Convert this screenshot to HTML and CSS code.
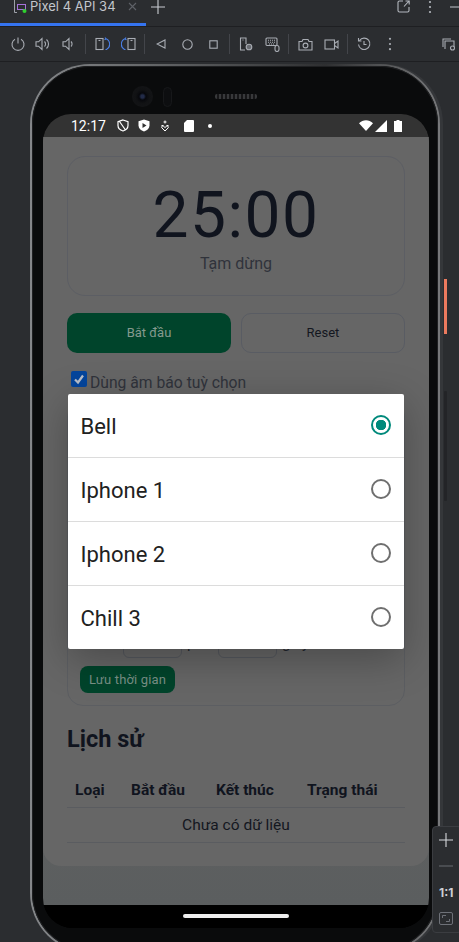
FILE: index.html
```html
<!DOCTYPE html>
<html lang="vi">
<head>
<meta charset="utf-8">
<title>Pixel 4 API 34</title>
<link rel="stylesheet" href="styles.css">
</head>
<body>
<div class="ide">
  <header class="tabbar">
    <div class="tab">
      <svg class="tab-icon" width="14" height="14" viewBox="0 0 14 14" fill="none"><path d="M4 12.500H1.500V-3H6" stroke="#9da0a8"/><rect x="4.500" y="4.500" width="8" height="5" stroke="#a572d8" fill="none"/><circle cx="11.500" cy="11" r="2" fill="#2fd02f"/></svg>
      <span class="tab-label">Pixel 4 API 34</span>
      <svg class="tab-close" width="9" height="9" viewBox="0 0 9 9"><path d="M1 1l7 7M8 1l-7 7" stroke="#5f6268" stroke-width="1.100"/></svg>
      <svg class="tab-add" width="14" height="14" viewBox="0 0 14 14"><path d="M7 0v14M0 7h14" stroke="#c9ccd2" stroke-width="1.100"/></svg>
    </div>
    <div class="tab-actions">
      <svg width="13" height="13" viewBox="0 0 13 13" fill="none" stroke="#b4b8bf" stroke-width="1.100"><path d="M6 1H2.500A1.500 1.500 0 0 0 1 2.500v8A1.500 1.500 0 0 0 2.500 12h8a1.500 1.500 0 0 0 1.500-1.500V7M7 6.500l5-5.500M8.500 1H12.200V4.500"/></svg>
      <svg width="4" height="14" viewBox="0 0 4 14" fill="#b4b8bf"><circle cx="2" cy="2" r="1.100"/><circle cx="2" cy="7" r="1.100"/><circle cx="2" cy="12" r="1.100"/></svg>
      <svg width="12" height="2" viewBox="0 0 12 2"><path d="M0 1h12" stroke="#b4b8bf" stroke-width="1.100"/></svg>
    </div>
  </header>
  <nav class="toolbar">
    <div class="group first">
      <span class="slot"><svg width="14" height="14" viewBox="0 0 14 14" fill="none" stroke="#a9adb4" stroke-width="1.100"><path d="M4 2.200a6 6 0 1 0 6 0M7 .5v6"/></svg></span>
      <span class="slot"><svg width="15" height="14" viewBox="0 0 15 14" fill="none" stroke="#a9adb4" stroke-width="1.100"><path d="M1 4.800h2.500L7 1.500v11L3.500 9.200H1zM9.500 4.500a3.500 3.500 0 0 1 0 5M11.500 2.500a6 6 0 0 1 0 9"/></svg></span>
      <span class="slot"><svg width="11" height="14" viewBox="0 0 11 14" fill="none" stroke="#a9adb4" stroke-width="1.100"><path d="M1 4.800h2.500L7 1.500v11L3.500 9.200H1zM9 4.500a3.500 3.500 0 0 1 0 5"/></svg></span>
    </div>
    <i class="sep"></i>
    <div class="group">
      <span class="slot"><svg width="15" height="14" viewBox="0 0 15 14" fill="none" stroke-width="1.100"><rect x="1" y="1.500" width="7" height="11" stroke="#a9adb4"/><path d="M3.500 3.500h2" stroke="#a9adb4"/><path d="M10.500 1.500a6 6 0 0 1 1 11h-1M10 .5l1 1.500-1.500.8" stroke="#4a80e8"/></svg></span>
      <span class="slot"><svg width="15" height="14" viewBox="0 0 15 14" fill="none" stroke-width="1.100"><rect x="7" y="1.500" width="7" height="11" stroke="#a9adb4"/><path d="M9.500 3.500h2" stroke="#a9adb4"/><path d="M4.500 1.500a6 6 0 0 0-1 11h1M5 .5L4 2l1.500.8" stroke="#4a80e8"/></svg></span>
    </div>
    <i class="sep"></i>
    <div class="group">
      <span class="slot"><svg width="10" height="10" viewBox="0 0 10 10" fill="none" stroke="#a9adb4" stroke-width="1.100"><path d="M9 1v8L1 5z"/></svg></span>
      <span class="slot"><svg width="11" height="11" viewBox="0 0 11 11" fill="none" stroke="#a9adb4" stroke-width="1.100"><circle cx="5.500" cy="5.500" r="4.700"/></svg></span>
      <span class="slot"><svg width="9" height="9" viewBox="0 0 9 9" fill="none" stroke="#a9adb4" stroke-width="1.100"><rect x=".8" y=".8" width="7.400" height="7.400"/></svg></span>
    </div>
    <i class="sep"></i>
    <div class="group">
      <span class="slot"><svg width="14" height="14" viewBox="0 0 14 14" fill="none" stroke="#a9adb4" stroke-width="1.100"><path d="M6 13H1.500V1H7v6"/><path d="M3.500 3h1"/><circle cx="10" cy="10" r="2.800" fill="#6a6d73"/></svg></span>
      <span class="slot"><svg width="15" height="15" viewBox="0 0 15 15" fill="none" stroke="#a9adb4" stroke-width="1.100"><rect x="1" y="1" width="11" height="7.500" rx="1"/><path d="M3 3.200h7M3 5.200h7M4 7h5" stroke-dasharray="1 1"/><rect x="10" y="8.500" width="4" height="6" rx="2" fill="#2b2d30"/></svg></span>
    </div>
    <i class="sep"></i>
    <div class="group">
      <span class="slot"><svg width="15" height="13" viewBox="0 0 15 13" fill="none" stroke="#a9adb4" stroke-width="1.100"><path d="M1 3.500h3L5 1.500h5l1 2h3v8.500H1z"/><circle cx="7.500" cy="7.500" r="2.400"/></svg></span>
      <span class="slot"><svg width="15" height="11" viewBox="0 0 15 11" fill="none" stroke="#a9adb4" stroke-width="1.100"><rect x="1" y="1" width="9.500" height="9"/><path d="M10.500 4.500L14 2v7l-3.500-2.500"/></svg></span>
    </div>
    <i class="sep"></i>
    <div class="group">
      <span class="slot"><svg width="14" height="14" viewBox="0 0 14 14" fill="none" stroke="#a9adb4" stroke-width="1.100"><path d="M2.500 3.500a5.700 5.700 0 1 1-1 4M1.500 1v3h3M7 4v3.500h2.500"/></svg></span>
      <span class="slot"><svg width="4" height="14" viewBox="0 0 4 14" fill="#a9adb4"><circle cx="2" cy="1.800" r="1.100"/><circle cx="2" cy="7" r="1.100"/><circle cx="2" cy="12.200" r="1.100"/></svg></span>
    </div>
    <span class="slot far"><svg width="14" height="13" viewBox="0 0 14 13" fill="none" stroke="#a9adb4" stroke-width="1.100"><path d="M1 9V1h8M3 11V3h9v6"/><circle cx="10.500" cy="10" r="2"/></svg></span>
  </nav>
</div>

<div class="phone">
  <div class="camera-row">
    <span class="lens"></span>
    <span class="sensor"></span>
    <span class="speaker"></span>
  </div>
  <div class="screen">
    <div class="status">
      <div class="status-left">
        <span class="clock">12:17</span>
        <svg width="12" height="13" viewBox="0 0 12 13" fill="none" stroke="#fff" stroke-width="1.200"><path d="M6 1l5 1.600v4c0 2.800-2.200 4.600-5 5.400-2.800-.8-5-2.600-5-5.400v-4zM2.500 2.500l6 8.500"/></svg>
        <svg width="12" height="13" viewBox="0 0 12 13"><path d="M6 .5l5.500 1.800v4.200c0 3-2.400 5-5.500 6-3.100-1-5.500-3-5.500-6V2.300z" fill="#fff"/><path d="M4.500 4l4 2.500-4 2.500z" fill="#333"/></svg>
        <svg width="12" height="12" viewBox="0 0 12 12" fill="none" stroke="#fff" stroke-width="1"><circle cx="6" cy="2" r="1"/><path d="M2.500 5.500h2M7.500 5.500h2M6 11L2.800 7.800c-.8-1.300.9-2.300 1.700-1.500L6 7.500l1.500-1.200c.8-.8 2.500.2 1.700 1.500z"/></svg>
        <svg class="sd" width="10" height="12" viewBox="0 0 10 12"><path d="M3 0h6a1 1 0 0 1 1 1v10a1 1 0 0 1-1 1H1a1 1 0 0 1-1-1V3z" fill="#fff"/></svg>
        <i class="dot"></i>
      </div>
      <div class="status-right">
        <svg width="14" height="11" viewBox="0 0 14 11"><path d="M0 3.200C4-.8 10-.8 14 3.200L7 11z" fill="#fff"/></svg>
        <svg class="signal" width="12" height="12" viewBox="0 0 12 12"><path d="M12 0v12H0z" fill="#fff"/></svg>
        <svg width="8" height="12" viewBox="0 0 8 12"><path d="M2.500 0h3v1H8v11H0V1h2.500z" fill="#fff"/></svg>
      </div>
    </div>

    <div class="viewport">
      <main class="app">
        <section class="timer-card">
          <div class="time">25:00</div>
          <div class="timer-state">Tạm dừng</div>
        </section>

        <div class="actions">
          <button class="btn primary">Bắt đầu</button>
          <button class="btn outline">Reset</button>
        </div>

        <label class="check-row">
          <span class="check"><svg width="12" height="12" viewBox="0 0 12 12" fill="none"><path d="M2 6.500l3 3 5-7" stroke="#b7bec9" stroke-width="2.200"/></svg></span>
          <span class="check-text">Dùng âm báo tuỳ chọn</span>
        </label>

        <section class="settings">
          <div class="time-row">
            <span class="time-label">Thời gian</span>
            <span class="field"></span>
            <span class="unit">phút</span>
            <span class="field"></span>
            <span class="unit">giây</span>
          </div>
          <button class="btn-save">Lưu thời gian</button>
        </section>

        <h2 class="history-title">Lịch sử</h2>
        <table class="history">
          <thead>
            <tr><th>Loại</th><th>Bắt đầu</th><th>Kết thúc</th><th>Trạng thái</th></tr>
          </thead>
          <tbody>
            <tr><td colspan="4">Chưa có dữ liệu</td></tr>
          </tbody>
        </table>
      </main>

      <div class="dialog">
        <div class="option"><span>Bell</span><i class="radio on"></i></div>
        <div class="option"><span>Iphone 1</span><i class="radio"></i></div>
        <div class="option"><span>Iphone 2</span><i class="radio"></i></div>
        <div class="option"><span>Chill 3</span><i class="radio"></i></div>
      </div>
    </div>

    <div class="navbar"><i class="home"></i></div>
  </div>
</div>

<i class="scroll-thumb"></i>
<i class="side-key"></i>

<aside class="zoom-panel">
  <svg width="14" height="14" viewBox="0 0 14 14"><path d="M7 0v14M0 7h14" stroke="#d5d7db" stroke-width="1.100"/></svg>
  <svg width="14" height="2" viewBox="0 0 14 2"><path d="M0 1h14" stroke="#63666c" stroke-width="1.100"/></svg>
  <span class="ratio">1:1</span>
  <svg width="14" height="13" viewBox="0 0 14 13" fill="none" stroke="#6e7178"><rect x=".5" y=".5" width="13" height="12" rx="1.500"/><path d="M3.500 6V3.500H7M10.500 7v2.500H7"/></svg>
</aside>
</body>
</html>
```

FILE: styles.css
```css
* { box-sizing: border-box; }
html, body { margin: 0; height: 100%; }
body {
  width: 459px;
  height: 942px;
  overflow: hidden;
  background: #2b2d30;
  font-family: Roboto, "Noto Sans", sans-serif;
  position: relative;
}
i { display: block; }

/* IDE chrome */
.ide { height: 62px; }
.tabbar {
  height: 27px;
  display: flex;
  justify-content: space-between;
  border-bottom: 1px solid #1e1f22;
  position: relative;
  overflow: hidden;
}
.tabbar::after {
  content: "";
  position: absolute;
  left: 0;
  bottom: 0;
  width: 146px;
  height: 3px;
  background: #3574f0;
}
.tab {
  display: flex;
  align-items: center;
  height: 13px;
  padding-left: 13px;
}
.tab-icon { flex: none; }
.tab-label {
  display: block;
  font: 13px/13px Inter, sans-serif;
  color: #c3c6cc;
  margin-left: 3px;
  white-space: nowrap;
}
.tab-close { margin-left: 12px; flex: none; }
.tab-add { margin-left: 14px; flex: none; }
.tab-actions {
  display: flex;
  align-items: center;
  height: 13px;
  margin-right: -3px;
  gap: 18px;
}
.tab-actions svg { flex: none; }
.toolbar {
  height: 35px;
  display: flex;
  align-items: center;
  padding-left: 5px;
  border-bottom: 1px solid #1e1f22;
  overflow: hidden;
}
.group { display: flex; }
.group.first .slot { width: 25px; }
.group.first { margin-right: 2px; }
.slot {
  width: 26px;
  height: 20px;
  display: flex;
  align-items: center;
  justify-content: center;
  flex: none;
}
.far { margin-left: 33px; }
.sep {
  width: 1px;
  height: 20px;
  margin: 0 3px;
  background: #43454a;
  flex: none;
}

/* Device */
.phone {
  position: absolute;
  left: 30px;
  top: 64px;
  width: 410px;
  height: 889px;
  padding: 51px 9px 0 11px;
  background:
    linear-gradient(#0a0b0c, #0a0b0c) padding-box,
    linear-gradient(to right, #85878a 0, #66686a 28%, #2e2f31 72%, #78797b 100%) border-box;
  border-radius: 60px;
  border: 2px solid transparent;
  box-shadow: inset 0 0 0 1px #1f2022, 3px 0 0 #35373a;
}
.camera-row {
  position: absolute;
  left: 100px;
  top: 20px;
  display: flex;
  align-items: center;
}
.lens {
  width: 21px;
  height: 21px;
  border-radius: 50%;
  background: radial-gradient(circle, #222b48 0 1.500px, #07080c 3.500px, #111214 7px, #151618 100%);
}
.sensor {
  width: 9px;
  height: 20px;
  margin-left: 10px;
  border-radius: 5px;
  background: #0d0e10;
  border: 1px solid #17181a;
}
.speaker {
  width: 42px;
  height: 5px;
  margin-left: 43px;
  border-radius: 2px;
  background: repeating-linear-gradient(90deg, #38393b 0 2px, #161618 2px 4px);
}
.screen {
  width: 386px;
  height: 814px;
  margin-top: -3px;
  border-radius: 28px 28px 30px 30px;
  overflow: hidden;
  display: flex;
  flex-direction: column;
  background: #000;
}
.status {
  height: 23px;
  flex: none;
  background: #333;
  display: flex;
  align-items: center;
  justify-content: space-between;
  padding: 0 27px 0 28px;
}
.status-left, .status-right { display: flex; align-items: center; }
.status-left { gap: 9px; }
.status-right { gap: 2px; }
.status svg { flex: none; }
.clock {
  font-size: 14px;
  color: #fff;
  margin-right: 2px;
}
.sd { margin-left: 4px; }
.signal { margin-right: 5px; }
.dot {
  width: 4px;
  height: 4px;
  border-radius: 50%;
  background: #fff;
  margin-left: 5px;
}
.viewport {
  height: 768px;
  flex: none;
  position: relative;
  overflow: hidden;
  background: linear-gradient(#5f6060 0, #5f6060 85%, #5b5e5f 100%);
}
.app {
  height: 729px;
  padding: 19px 24px 0;
  background: #666;
  border-radius: 0 0 18px 18px;
}
.timer-card {
  height: 140px;
  border: 1px solid #5c5e64;
  border-radius: 18px;
  text-align: center;
  padding-top: 22px;
}
.time {
  font-size: 64px;
  line-height: 74px;
  color: #10141e;
  letter-spacing: 1.500px;
}
.timer-state {
  font-size: 16px;
  line-height: 18px;
  margin-top: 2px;
  color: #30333b;
}
.actions {
  display: grid;
  grid-template-columns: 164px 164px;
  gap: 10px;
  margin-top: 17px;
}
.btn {
  height: 40px;
  border-radius: 10px;
  padding: 0 0 2px;
  font: 13px Roboto, sans-serif;
}
.primary { background: #00442b; border: 0; color: #849a8e; }
.outline { background: transparent; border: 1px solid #595c63; color: #14171f; }
.check-row {
  display: flex;
  align-items: center;
  gap: 3px;
  margin: 11px 0 0 4px;
  height: 30px;
  font-size: 15.700px;
  color: #30333b;
}
.check {
  width: 16px;
  height: 16px;
  background: #04459c;
  border-radius: 2px;
  display: flex;
  align-items: center;
  justify-content: center;
  margin-top: -1px;
}
.check-text { margin-top: 6px; }
.settings {
  height: 305px;
  margin-top: 7px;
  border: 1px solid #5c5e62;
  border-radius: 16px;
  padding: 0 12px;
  display: flex;
  flex-direction: column;
  justify-content: flex-end;
}
.time-row {
  display: flex;
  align-items: center;
  height: 36px;
  font-size: 15px;
  color: #22252d;
  white-space: nowrap;
}
.time-label { width: 43px; visibility: hidden; overflow: hidden; }
.field {
  width: 59px;
  height: 36px;
  border: 1px solid #55585e;
  border-radius: 6px;
}
.unit { width: 36px; padding: 6px 0 0 5px; }
.btn-save {
  width: 95px;
  height: 27px;
  margin: 8px 0 12px;
  padding: 0;
  border: 0;
  border-radius: 8px;
  background: #00442b;
  color: #7a9086;
  font: 13px Roboto, sans-serif;
  letter-spacing: .15px;
}
.history-title {
  margin: 19px 0 0 0;
  font-size: 23.500px;
  line-height: 28px;
  font-weight: 700;
  color: #10141e;
}
.history {
  width: 338px;
  table-layout: fixed;
  margin-top: 20px;
  border-collapse: collapse;
  font-size: 15.500px;
  color: #14171f;
}
.history th {
  height: 34px;
  padding: 0 0 0 8px;
  text-align: left;
  font-weight: 700;
  color: #10141e;
  white-space: nowrap;
  border-bottom: 1px solid #5a5c60;
}
.history th:nth-child(1) { width: 56px; }
.history th:nth-child(2) { width: 85px; }
.history th:nth-child(3) { width: 91px; }
.history td {
  height: 35px;
  padding: 0;
  text-align: center;
  font-size: 15.500px;
  border-bottom: 1px solid #5a5c60;
}

/* Radio dialog */
.dialog {
  position: absolute;
  left: 25px;
  top: 257px;
  width: 336px;
  background: #fff;
  border-radius: 2px;
  box-shadow: 0 10px 40px rgba(0, 0, 0, .28);
}
.option {
  height: 64px;
  display: flex;
  align-items: center;
  justify-content: space-between;
  padding: 0 13px 0 12.500px;
  border-bottom: 1px solid #dcdcdc;
  font-size: 22px;
  color: #212121;
}
.option span { margin-top: 2px; }
.option:last-child { height: 63px; border-bottom: 0; }
.radio {
  width: 20px;
  height: 20px;
  border: 2px solid #6f6f6f;
  border-radius: 50%;
  margin-top: -2px;
}
.radio.on {
  border-color: #00897b;
  background: radial-gradient(circle, #00897b 0 5px, transparent 5.500px);
}

.navbar {
  height: 23px;
  flex: none;
  background: #000;
  display: flex;
  justify-content: center;
  padding-top: 9px;
}
.home {
  width: 106px;
  height: 4px;
  border-radius: 2px;
  background: #eee;
}

/* Scroll marker, side key and zoom controls */
.scroll-thumb {
  position: absolute;
  left: 444px;
  top: 279px;
  width: 3px;
  height: 55px;
  background: #ec7a5e;
}
.side-key {
  position: absolute;
  left: 444px;
  top: 391px;
  width: 3px;
  height: 110px;
  background: #232427;
  border-radius: 1px;
}
.zoom-panel {
  position: absolute;
  left: 432px;
  top: 826px;
  width: 30px;
  height: 107px;
  background: #2b2d30;
  border: 1px solid #3b3d41;
  border-radius: 4px;
  display: flex;
  flex-direction: column;
  align-items: flex-start;
  padding: 6px 0 0 6px;
}
.zoom-panel svg { flex: none; }
.zoom-panel svg:nth-child(2) { margin-top: 18px; }
.ratio {
  display: block;
  font: 700 12px/14px Inter, sans-serif;
  color: #ced0d4;
  margin-top: 19px;
}
.zoom-panel svg:nth-child(4) { margin-top: 12px; }
```
